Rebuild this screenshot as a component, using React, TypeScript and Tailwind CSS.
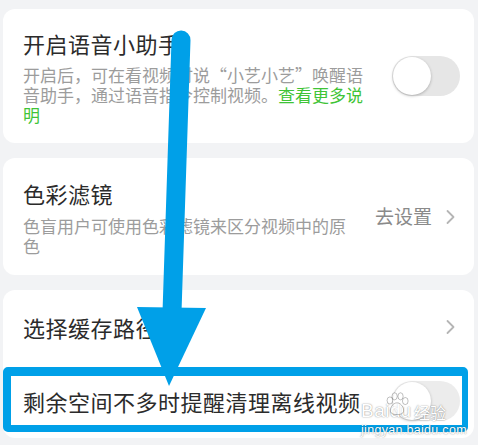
import React from "react";

const font = { fontFamily: '"Noto Sans CJK SC", "Noto Sans", sans-serif' };
const latin = { fontFamily: '"Liberation Sans", Arial, sans-serif' };

function Toggle({ faded = false }: { faded?: boolean }) {
  return (
    <div
      className={`w-[68px] h-[40px] shrink-0 rounded-full p-[1px] flex items-center ${
        faded ? "bg-[#ececec]" : "bg-[#e6e6e6]"
      }`}
    >
      <div className="w-[38px] h-[38px] rounded-full bg-white shadow-[0_1px_3px_rgba(0,0,0,0.25)]" />
    </div>
  );
}

function Chevron() {
  return (
    <svg width="9" height="16" viewBox="0 0 9 16" className="shrink-0">
      <polyline points="1.5,2 7.5,8 1.5,14" fill="none" stroke="#b5b5b5" strokeWidth="1.8" strokeLinecap="round" strokeLinejoin="round" />
    </svg>
  );
}

export default function App() {
  return (
    <div className="relative w-[478px] h-[445px] overflow-hidden bg-[#f2f3f5]" style={font}>
      <div className="flex flex-col gap-[15px] pt-[9px] pl-[3px] pr-[4px]">
        {/* voice assistant */}
        <div className="h-[134px] bg-white rounded-[12px] flex items-center gap-4 pl-5 pr-[14px]">
          <div className="flex-1">
            <div className="text-[22px] leading-[30px] tracking-[0.5px] text-[#2b2b2b] mb-[7px]">开启语音小助手</div>
            <p className="text-[17px] leading-[20px] text-[#9c9c9c]">
              开启后，可在看视频时说“小艺小艺”唤醒语音助手，通过语音指令控制视频。
              <span className="text-[#3fc437]">查看更多说明</span>
            </p>
          </div>
          <Toggle />
        </div>

        {/* color filter */}
        <div className="h-[117px] bg-white rounded-[12px] flex items-center gap-4 pl-5 pr-[19px]">
          <div className="flex-1">
            <div className="text-[22px] leading-[30px] tracking-[0.5px] text-[#2b2b2b] mb-[8px]">色彩滤镜</div>
            <p className="text-[17px] leading-[20px] text-[#9c9c9c]">色盲用户可使用色彩滤镜来区分视频中的原色</p>
          </div>
          <div className="flex items-center gap-[14px]">
            <span className="text-[19px] text-[#8a8a8a]">去设置</span>
            <Chevron />
          </div>
        </div>

        {/* cache */}
        <div className="bg-white rounded-[12px] flex flex-col">
          <div className="h-[74px] flex items-center justify-between pl-5 pr-[19px]">
            <div className="text-[22px] tracking-[0.5px] text-[#2b2b2b]">选择缓存路径</div>
            <Chevron />
          </div>
          <div className="relative h-[74px] flex items-center gap-4 pl-5 pr-[14px]">
            <div className="flex-1 text-[22px] tracking-[0.5px] text-[#2b2b2b]">剩余空间不多时提醒清理离线视频</div>
            <Toggle faded />
            {/* annotation box */}
            <div className="absolute left-0 right-[6px] top-[3px] bottom-[6px] border-[#00a0e8] border-t-[9px] border-l-[8px] border-r-[6px] border-b-[7px] rounded-[5px]" />
          </div>
        </div>
      </div>

      {/* annotation arrow */}
      <svg className="absolute inset-0 pointer-events-none" width="478" height="445" viewBox="0 0 478 445">
        <line x1="181" y1="40" x2="172" y2="312" stroke="#00a0e8" strokeWidth="19" strokeLinecap="round" />
        <polygon points="137,307 206,308 169,386" fill="#00a0e8" />
      </svg>

      {/* watermark */}
      <div className="absolute left-[361px] top-[401px] pointer-events-none text-white [text-shadow:0_0_1.5px_rgba(0,0,0,0.55)]">
        <div className="flex items-end leading-none" style={latin}>
          <span className="text-[19px] tracking-[0.5px]">Bai</span>
          <span className="relative text-[19px]">
            du
            <svg className="absolute left-[-6px] bottom-[4px]" width="26" height="24" viewBox="0 0 22 20">
              <g fill="rgba(255,255,255,0.6)" stroke="rgba(0,0,0,0.3)" strokeWidth="0.7">
                <ellipse cx="5" cy="7" rx="2.4" ry="3" />
                <ellipse cx="9" cy="3.5" rx="2.2" ry="3" />
                <ellipse cx="14" cy="3.5" rx="2.2" ry="3" />
                <ellipse cx="18" cy="7.5" rx="2.4" ry="3" />
                <path d="M11 9 C7 9 4 15 6 17.5 C8 19.5 14 19.5 16 17.5 C18 15 15 9 11 9 Z" />
              </g>
            </svg>
          </span>
          <span className="ml-[3px] text-[16px]" style={font}>经验</span>
        </div>
        <div className="text-[12.5px] leading-none mt-[4px] tracking-[0.3px]" style={latin}>
          jingyan.baidu.com
        </div>
      </div>
    </div>
  );
}
